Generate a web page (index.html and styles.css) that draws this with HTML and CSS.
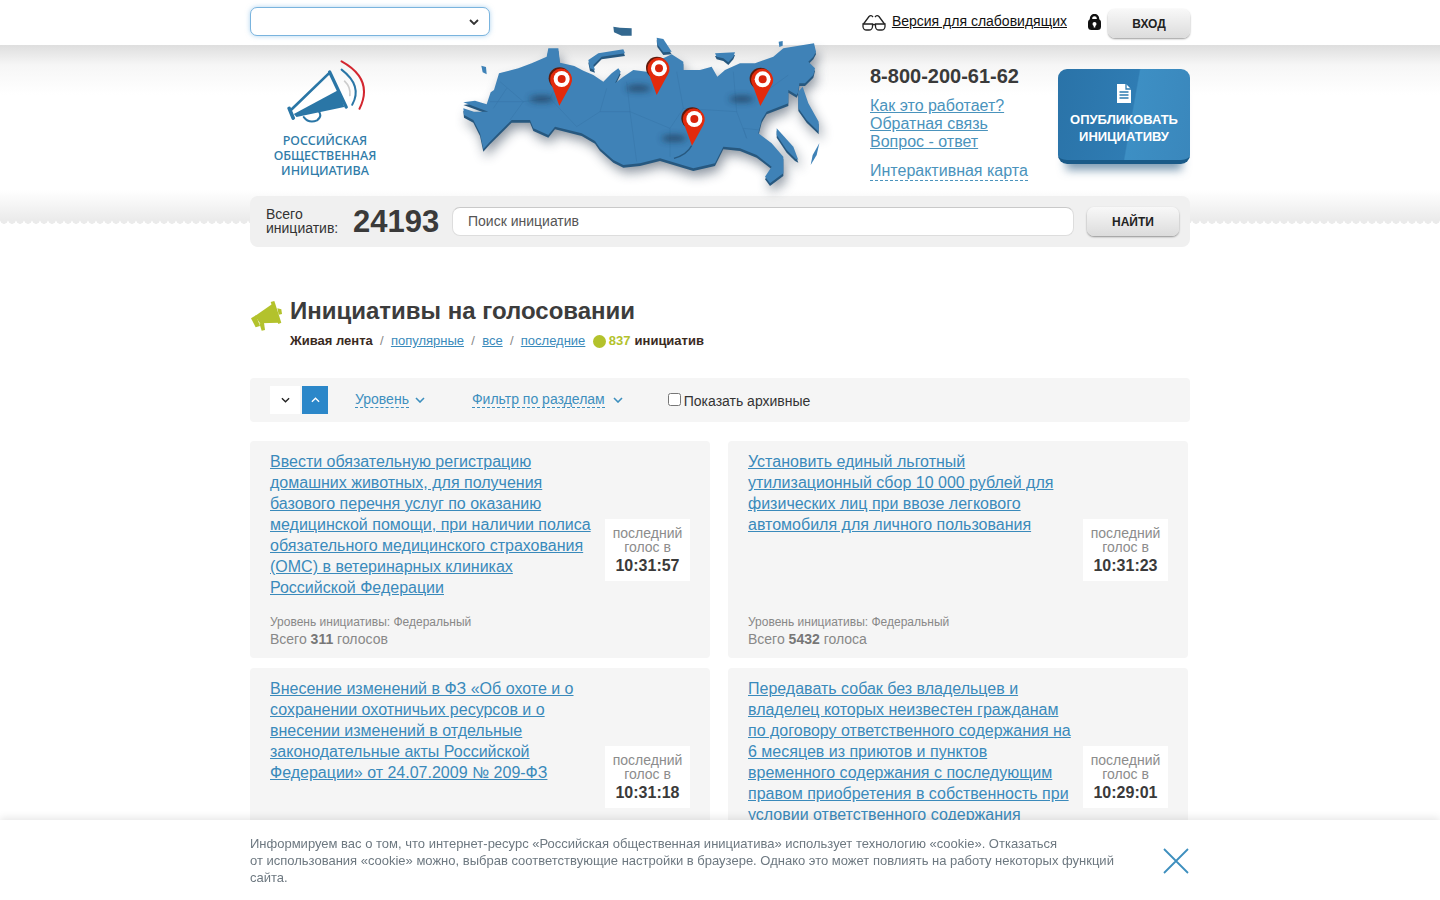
FILE: index.html
```html
<!DOCTYPE html>
<html lang="ru">
<head>
<meta charset="utf-8">
<title>Российская общественная инициатива</title>
<link rel="stylesheet" href="styles.css">
</head>
<body>
<div class="topbar">
  <div class="wrap topbar-in">
    <div class="region">
      <svg class="chev-s" viewBox="0 0 10 6"><path d="M1 1l4 4 4-4" fill="none" stroke="#333" stroke-width="1.8"/></svg>
    </div>
    <div class="topbar-right">
      <svg class="glasses" viewBox="0 0 24 17"><g fill="none" stroke="#222" stroke-width="1.3"><path d="M1.500 10L7 2.500Q9 .5 11 3M22.500 10L17 2.500Q15 .5 13 3"/><path d="M1 10h9.500v2.500a3.500 3.500 0 0 1-3.500 3.500H4.500A3.500 3.500 0 0 1 1 12.500zM13.500 10H23v2.500a3.500 3.500 0 0 1-3.500 3.500H17a3.500 3.500 0 0 1-3.500-3.500zM10.500 11q1.500-1 3 0"/></g></svg>
      <a class="impaired" href="#">Версия для слабовидящих</a>
      <svg class="lock" viewBox="0 0 13 16"><path d="M3 7V4.500a3.500 3.500 0 0 1 7 0V7" fill="none" stroke="#111" stroke-width="2.400"/><rect y="5" width="13" height="11" rx="3.500" fill="#111"/><circle cx="6.500" cy="10" r="2" fill="#fff"/><rect x="5.700" y="10" width="1.600" height="3.500" fill="#fff"/></svg>
      <a class="btn btn-login" href="#">ВХОД</a>
    </div>
  </div>
</div>

<header class="head">
  <div class="wrap">
    <div class="head-row">
      <a class="logo" href="#">
        <svg class="logo-icon" viewBox="140 180 240 190">
          <g fill="none" stroke="#2a76a6" stroke-linecap="round">
            <path d="M152 330L268 218" stroke-width="8"/>
            <path d="M268 216L318 322" stroke-width="10"/>
            <path d="M146 326L158 355" stroke-width="11"/>
            <path d="M190 352Q205 372 230 362Q246 350 236 336" stroke-width="6"/>
            <path d="M304 209Q368 258 336 315" stroke-width="6"/>
          </g>
          <path d="M160 343L296 270L312 322L168 352Z" fill="#2a76a6"/>
          <path d="M313 244Q332 262 329 287" fill="none" stroke="#ccc" stroke-width="5" stroke-linecap="round"/>
          <path d="M304 184Q402 238 358 327" fill="none" stroke="#d3262f" stroke-width="6" stroke-linecap="round"/>
        </svg>
        <span class="logo-text">РОССИЙСКАЯ<br>ОБЩЕСТВЕННАЯ<br>ИНИЦИАТИВА</span>
      </a>

      <svg class="map" viewBox="0 0 1140 540">
        <defs>
          <filter id="b1" x="-30%" y="-30%" width="160%" height="170%"><feGaussianBlur stdDeviation="18"/></filter>
          <filter id="b2" x="-50%" y="-150%" width="200%" height="400%"><feGaussianBlur stdDeviation="9"/></filter>
          <path id="ru" d="M40 262L75 257L110 268L122 232L132 225L147 175L205 160L245 145L290 125L295 100L325 100L330 143L347 147L373 153L400 167L430 180L460 200L485 175L505 160L512 170L495 205L520 185L550 165L590 170L620 135L640 130L665 118L700 140L700 165L750 165L785 155L802 185L825 165L870 145L915 145L970 125L1000 100L1060 90L1092 85L1098 110L1090 125L1075 140L1095 160L1090 180L1065 205L1048 205L1045 230L1040 240L1015 225L1015 265L950 290L935 315L925 355L965 385L1000 425L1000 475L960 505L945 485L965 455L920 420L870 400L820 395L795 445L730 460L630 430L570 445L520 450L490 435L450 400L435 378L395 355L315 335L295 360L250 340L240 315L185 315L170 330L145 355L120 380L100 402L90 355L70 315L42 300L40 280L72 290L115 290L75 275Z"/>
          <path id="kam" d="M1045 230L1058 215L1075 265L1106 320L1106 350L1070 315L1045 280Z"/>
          <path id="nz" d="M415 135L445 115L520 103L525 115L455 125L430 150L435 165L420 160Z"/>
          <path id="sak" d="M980 340L1030 395L1045 435L1035 430L1010 405L980 360Z"/>
          <g id="pin">
            <circle cx="-6" cy="-82" r="33" fill="#5e1a0c"/>
            <path d="M-7 0L-29 -60A33 33 0 1 1 27 -62Z" fill="#e32a0c"/>
            <circle cx="0" cy="-80" r="24" fill="#fff"/>
            <circle cx="0" cy="-80" r="12" fill="#d9230b"/>
          </g>
        </defs>
        <g fill="#4f5d6e" opacity=".65" filter="url(#b1)" transform="translate(8 24)">
          <use href="#ru"/><use href="#kam"/><use href="#sak"/>
        </g>
        <g fill="#27587f" transform="translate(0 8)">
          <use href="#ru"/><use href="#kam"/><use href="#nz"/><use href="#sak"/>
          <path d="M620 68L640 72L665 110L640 112L622 88Z"/>
          <path d="M795 115L855 112L850 125L835 142L820 130L800 125Z"/>
        </g>
        <g fill="#3f82b7">
          <use href="#ru"/><use href="#kam"/><use href="#nz"/><use href="#sak"/>
          <path d="M94 152L108 156L110 178L98 172Z"/>
          <path d="M620 68L640 72L665 110L640 112L622 88Z"/>
          <path d="M795 115L855 112L850 125L835 142L820 130L800 125Z"/>
          <path d="M986 80L998 78L998 92L988 96Z"/>
          <path d="M1082 450L1088 420L1108 385L1100 420Z"/>
          <path d="M490 35L510 38L545 40L545 62L515 62L492 52Z" fill="#33688f"/>
        </g>
        <g fill="none" stroke="#3674a6" stroke-width="1.500" opacity=".9">
          <path d="M150 200L220 260L180 315M220 260L300 250L380 335M300 250L340 170M380 335L450 290L470 220M450 290L540 290L530 200M540 290L560 440M540 290L660 340L700 280M700 280L680 170M700 280L860 290L850 170M860 290L890 370L880 340M660 340L660 425M120 260L220 260M880 340L930 345M1015 180L960 220M170 220L130 280"/>
        </g>
        <path d="M672 430Q710 420 725 392" fill="none" stroke="#27587f" stroke-width="4"/>
        <g fill="#1b3550" opacity=".75" filter="url(#b2)">
          <ellipse cx="275" cy="252" rx="38" ry="9"/>
          <ellipse cx="565" cy="220" rx="38" ry="9"/>
          <ellipse cx="875" cy="252" rx="38" ry="9"/>
          <ellipse cx="672" cy="370" rx="38" ry="9"/>
        </g>
        <use href="#pin" transform="translate(335 272)"/>
        <use href="#pin" transform="translate(627 240)"/>
        <use href="#pin" transform="translate(938 273)"/>
        <use href="#pin" transform="translate(733 392)"/>
      </svg>

      <div class="contacts">
        <div class="phone">8-800-200-61-62</div>
        <a href="#">Как это работает?</a>
        <a href="#">Обратная связь</a>
        <a href="#">Вопрос - ответ</a>
        <a class="dashed map-link" href="#">Интерактивная карта</a>
      </div>

      <a class="publish" href="#">
        <svg class="doc" viewBox="0 0 16 19"><path d="M1 0h9l5 5v14H1z" fill="#fff"/><path d="M10 0v5h5M3.500 8h9M3.500 11h9M3.500 14h9" fill="none" stroke="#2f7cb0" stroke-width="1.300"/></svg>
        <span>ОПУБЛИКОВАТЬ<br>ИНИЦИАТИВУ</span>
      </a>
    </div>

    <form class="search">
      <div class="total-label">Всего<br>инициатив:</div>
      <div class="total-num">24193</div>
      <input class="search-input" type="text" placeholder="Поиск инициатив">
      <button class="btn btn-find" type="button">НАЙТИ</button>
    </form>
  </div>
</header>

<main class="wrap">
  <section class="page-title">
    <svg class="horn" viewBox="30 30 96 96"><g fill="#b3c22c"><path d="M45 78L100 40L118 98L60 100Z"/><path d="M92 36L103 33L124 98L115 102Z"/><path d="M112 55L124 58L126 72L116 74Z"/><path d="M33 85L48 76L60 108L47 112Z"/><path d="M58 100L72 98L75 120L65 122Z"/></g></svg>
    <div>
      <h1>Инициативы на голосовании</h1>
      <div class="subnav">
        <b class="cur">Живая лента</b><i>/</i><a href="#">популярные</a><i>/</i><a href="#">все</a><i>/</i><a href="#">последние</a>
        <span class="count"><em class="dot"></em><b class="green">837</b><b class="cur">инициатив</b></span>
      </div>
    </div>
  </section>

  <div class="filters">
    <div class="sort">
      <span class="sort-btn"><svg viewBox="0 0 10 6"><path d="M1 1l4 4 4-4" fill="none" stroke="#222" stroke-width="1.500"/></svg></span>
      <span class="sort-btn active"><svg viewBox="0 0 10 6"><path d="M1 5l4-4 4 4" fill="none" stroke="#fff" stroke-width="1.500"/></svg></span>
    </div>
    <a class="filter-link first" href="#"><span class="dashed">Уровень</span><svg viewBox="0 0 10 6"><path d="M1 1l4 4 4-4" fill="none" stroke="#3d8fbe" stroke-width="1.600"/></svg></a>
    <a class="filter-link second" href="#"><span class="dashed">Фильтр по разделам</span><svg viewBox="0 0 10 6"><path d="M1 1l4 4 4-4" fill="none" stroke="#3d8fbe" stroke-width="1.600"/></svg></a>
    <label class="archive"><input type="checkbox">Показать архивные</label>
  </div>

  <div class="cards">
    <article class="card">
      <div class="card-main">
        <a class="card-title" href="#">Ввести обязательную регистрацию домашних животных, для получения базового перечня услуг по оказанию медицинской помощи, при наличии полиса обязательного медицинского страхования (ОМС) в ветеринарных клиниках Российской Федерации</a>
        <div class="card-meta"><div class="level">Уровень инициативы: Федеральный</div><div class="votes">Всего <b>311</b> голосов</div></div>
      </div>
      <div class="last-vote">последний голос в<b>10:31:57</b></div>
    </article>
    <article class="card">
      <div class="card-main">
        <a class="card-title" href="#">Установить единый льготный утилизационный сбор 10 000 рублей для физических лиц при ввозе легкового автомобиля для личного пользования</a>
        <div class="card-meta"><div class="level">Уровень инициативы: Федеральный</div><div class="votes">Всего <b>5432</b> голоса</div></div>
      </div>
      <div class="last-vote">последний голос в<b>10:31:23</b></div>
    </article>
    <article class="card">
      <div class="card-main">
        <a class="card-title" href="#">Внесение изменений в ФЗ «Об охоте и о сохранении охотничьих ресурсов и о внесении изменений в отдельные законодательные акты Российской Федерации» от 24.07.2009 № 209-ФЗ</a>
      </div>
      <div class="last-vote">последний голос в<b>10:31:18</b></div>
    </article>
    <article class="card">
      <div class="card-main">
        <a class="card-title" href="#">Передавать собак без владельцев и владелец которых неизвестен гражданам по договору ответственного содержания на 6 месяцев из приютов и пунктов временного содержания с последующим правом приобретения в собственность при условии ответственного содержания</a>
      </div>
      <div class="last-vote">последний голос в<b>10:29:01</b></div>
    </article>
  </div>
</main>

<div class="cookie">
  <div class="wrap cookie-in">
    <p>Информируем вас о том, что интернет-ресурс «Российская общественная инициатива» использует технологию «cookie». Отказаться от&nbsp;использования «cookie» можно, выбрав соответствующие настройки в браузере. Однако это может повлиять на работу некоторых функций сайта.</p>
    <svg class="close" viewBox="0 0 26 26"><path d="M1 1l24 24M25 1L1 25" fill="none" stroke="#3d8fbe" stroke-width="1.800"/></svg>
  </div>
</div>
</body>
</html>
```

FILE: styles.css
```css
* { box-sizing: border-box; }
html, body { margin: 0; padding: 0; }
body { font-family: "Liberation Sans", Arial, sans-serif; font-size: 14px; color: #333; background: #fff; }
a { color: #3a8abb; }
.wrap { width: 940px; margin: 0 auto; }

.topbar { height: 45px; background: #fff; }
.topbar-in { display: flex; justify-content: space-between; }
.region { width: 240px; height: 29px; margin-top: 7px; background: #fff; border: 1px solid #7ab4de; border-radius: 7px; box-shadow: 0 0 5px rgba(110,175,225,.55); display: flex; align-items: center; justify-content: flex-end; padding-right: 10px; }
.chev-s { width: 10px; height: 6px; }
.topbar-right { display: flex; align-items: flex-start; }
.glasses { width: 24px; height: 17px; margin: 14px 6px 0 0; }
.impaired { color: #111; font-size: 14px; line-height: 16px; margin-top: 13px; }
.lock { width: 13px; height: 16px; margin: 14px 7px 0 21px; }
.btn { display: flex; align-items: center; justify-content: center; border: 0; border-radius: 7px; color: #222; font: bold 12px "Liberation Sans", Arial, sans-serif; text-decoration: none; background: linear-gradient(#f8f8f8, #dcdcdc); box-shadow: 0 1px 2px rgba(0,0,0,.4); }
.btn-login { width: 82px; height: 29px; margin-top: 9px; }

.head { height: 202px; background:
  radial-gradient(circle at 4px 0, #ebebeb 3.500px, transparent 4px) 0 175px / 8px 4px repeat-x,
  linear-gradient(#fff, #ebebeb) 0 145px / 100% 30px no-repeat,
  linear-gradient(#dedede, #f6f6f6 40%, #fff) 0 0 / 100% 50px no-repeat; }
.head-row { display: flex; height: 151px; }
.logo { width: 200px; flex: none; display: flex; flex-direction: column; align-items: center; padding: 15px 50px 0 0; text-decoration: none; }
.logo-icon { width: 80px; height: 63px; margin-left: 4px; }
.logo-text { margin-top: 10px; font: 500 12.500px/15px "Noto Sans", "Open Sans", sans-serif; color: #2f7ba8; text-align: center; white-space: nowrap; }
.map { width: 380px; height: 180px; flex: none; margin-top: -30px; overflow: visible; }
.contacts { width: 188px; margin-left: 40px; display: flex; flex-direction: column; align-items: flex-start; padding-top: 20px; }
.contacts a { font-size: 16px; line-height: 18px; color: #4a93bc; }
.phone { font-size: 20px; font-weight: bold; line-height: 23px; color: #3a3a3a; margin-bottom: 9px; }
.dashed { text-decoration: none; border-bottom: 1px dashed currentColor; }
.contacts .map-link { margin-top: 11px; }
.publish { width: 132px; height: 95px; margin-top: 24px; flex: none; display: flex; flex-direction: column; align-items: center; color: #fff; text-decoration: none; border-radius: 9px; border-bottom: 4px solid #1a5a88; background: linear-gradient(100deg, #2a73a8, #2f7cb3 55%, #3d8fc4 56%, #3a87bc); box-shadow: 0 14px 10px -8px rgba(40,90,130,.6); padding-top: 15px; }
.doc { width: 16px; height: 19px; }
.publish span { font-size: 13px; font-weight: bold; line-height: 17px; text-align: center; margin-top: 8px; }

.search { height: 51px; background: #f0f0f0; border-radius: 8px; display: flex; align-items: center; padding: 0 11px 0 16px; }
.total-label { font-size: 14px; line-height: 14px; color: #333; width: 87px; flex: none; margin-top: -2px; }
.total-num { font-size: 31px; font-weight: bold; color: #3a3a3a; width: 99px; flex: none; }
.search-input { width: 622px; height: 29px; flex: none; border: 1px solid #ddd; border-top-color: #c9c9c9; border-radius: 8px; background: #fff; padding: 0 15px 2px; font: 14px "Liberation Sans", Arial, sans-serif; }
.search-input::placeholder { color: #555; opacity: 1; }
.btn-find { width: 92px; height: 29px; margin-left: 13px; }

.page-title { display: flex; align-items: flex-start; margin-top: 50px; }
.horn { width: 32px; height: 32px; flex: none; margin: 3px 8px 0 0; }
h1 { font-size: 24px; line-height: 28px; margin: 0; color: #3c3c3c; }
.subnav { font-size: 13px; line-height: 16px; margin-top: 8px; display: flex; align-items: center; }
.subnav i { font-style: normal; color: #888; margin: 0 7.250px; }
.cur { color: #3a2a1e; }
.count { margin-left: 7.500px; display: flex; align-items: center; }
.dot { width: 13px; height: 13px; border-radius: 50%; background: #b3c22c; margin-right: 3px; }
.green { color: #b3c22c; margin-right: 4px; }

.filters { height: 44px; margin-top: 29px; background: #f5f5f5; border-radius: 4px; display: flex; align-items: center; padding-left: 20px; }
.sort { display: flex; gap: 2px; }
.sort-btn { width: 30px; height: 28px; background: #fff; display: flex; align-items: center; justify-content: center; }
.sort-btn + .sort-btn { width: 26px; }
.sort-btn svg { width: 9px; height: 6px; }
.sort-btn.active { background: #2b87c9; }
.filter-link { display: flex; align-items: center; gap: 6px; color: #3d8fbe; text-decoration: none; line-height: 15px; }
.filter-link svg { width: 10px; height: 6px; }
.filter-link.first { margin-left: 27px; }
.filter-link.second { margin-left: 47px; gap: 8px; }
.archive { margin-left: 45px; padding-top: 2px; display: flex; align-items: center; color: #333; }
.archive input { margin: 0 3px 4px 0; }

.cards { display: grid; grid-template-columns: 460px 460px; column-gap: 18px; row-gap: 10px; margin-top: 19px; }
.card { background: #f5f5f5; border-radius: 4px; height: 217px; padding: 10px 20px; display: flex; align-items: center; justify-content: space-between; }
.card + .card + .card { height: 218px; }
.card-main { width: 325px; height: 100%; display: flex; flex-direction: column; justify-content: space-between; }
.card-title { font-size: 16px; line-height: 21px; color: #3a8abb; }
.level { font-size: 12px; line-height: 16px; color: #888; }
.votes { font-size: 14px; line-height: 18px; color: #888; }
.votes b { color: #777; }
.last-vote { width: 85px; height: 62px; background: #fff; text-align: center; color: #8c8c8c; font-size: 14px; line-height: 14px; padding-top: 7px; }
.last-vote b { display: block; color: #3a3a3a; font-size: 16px; line-height: 20px; margin-top: 2px; }

.cookie { position: fixed; left: 0; right: 0; bottom: 0; height: 80px; background: #fff; box-shadow: 0 -2px 8px rgba(0,0,0,.1); }
.cookie-in { display: flex; justify-content: space-between; align-items: flex-start; }
.cookie p { width: 870px; margin: 15px 0 0; font-size: 13px; line-height: 17px; color: #6d7880; }
.close { width: 26px; height: 26px; margin: 28px 1px 0 0; }
```
